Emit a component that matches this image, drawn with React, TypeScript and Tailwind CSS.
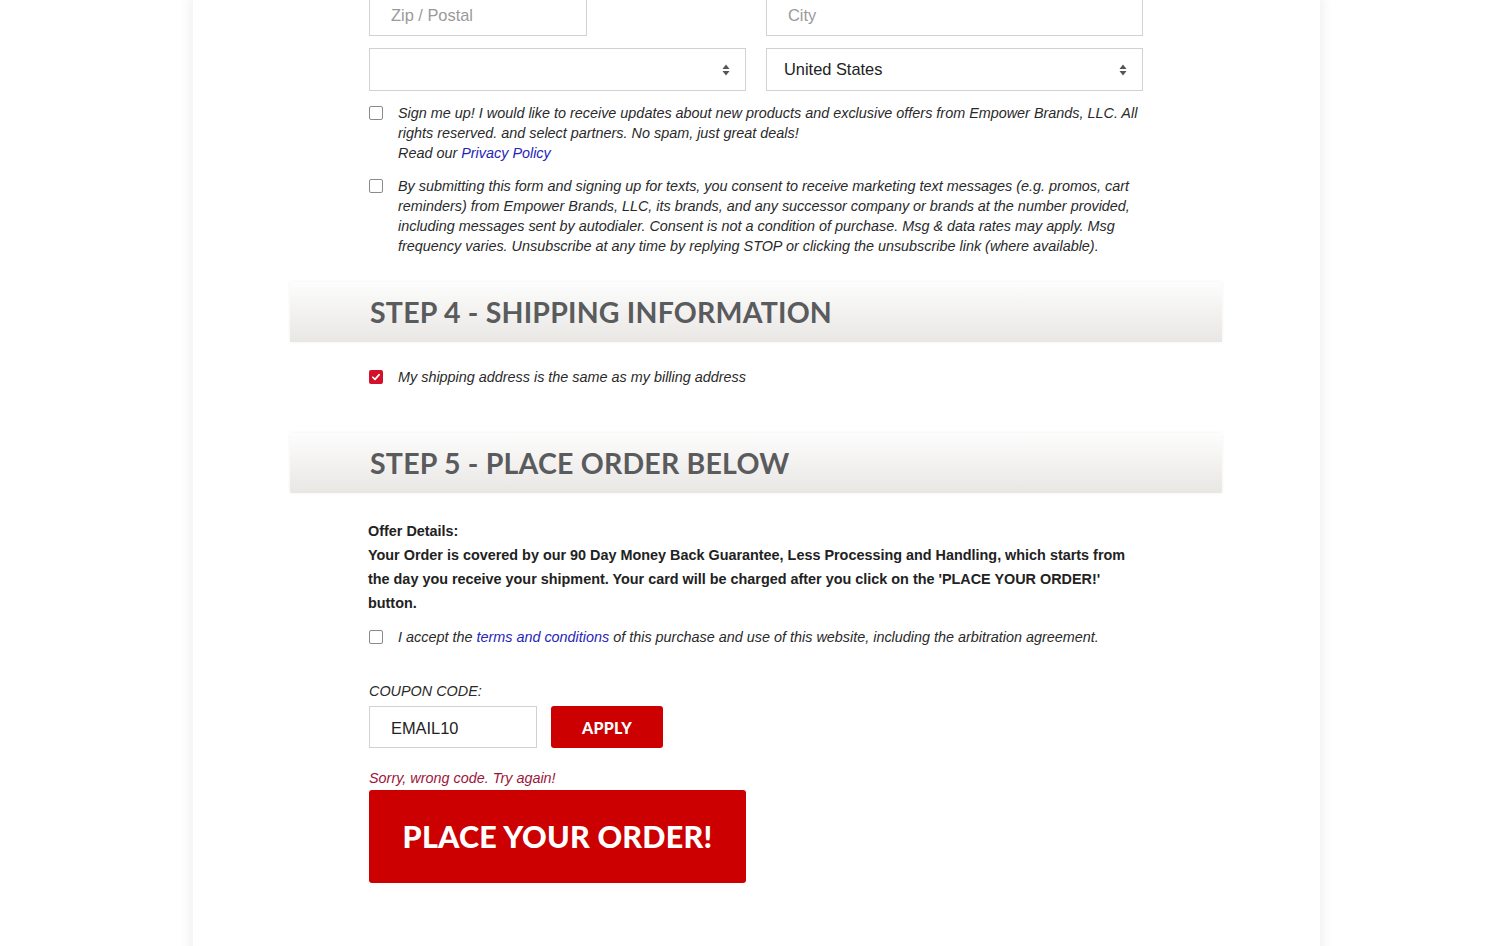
// Checkout form: steps 4 and 5 of the order page

const body = "font-['Liberation_Sans',Arial,sans-serif]";
const heading = "font-['Lato','Open_Sans',sans-serif]";

function Box({ checked = false }: { checked?: boolean }) {
  if (checked) {
    return (
      <span className="mt-[3px] flex h-[14px] w-[14px] shrink-0 items-center justify-center rounded-[2px] bg-[#d4112b]">
        <svg viewBox="0 0 12 12" className="h-[10px] w-[10px]">
          <path d="M2.2 6.3 4.8 8.8 9.8 3.2" fill="none" stroke="#fff" strokeWidth="2" strokeLinecap="round" strokeLinejoin="round" />
        </svg>
      </span>
    );
  }
  return <span className="mt-[3px] h-[14px] w-[14px] shrink-0 rounded-[2px] border border-[#8a8a8a] bg-white" />;
}

function Arrows() {
  return (
    <svg viewBox="0 0 8 12" className="h-[12px] w-[8px]">
      <path d="M4 0.5 7.5 5H0.5Z" fill="#555" />
      <path d="M4 11.5 7.5 7H0.5Z" fill="#555" />
    </svg>
  );
}

function Select({ value }: { value?: string }) {
  return (
    <div className="flex h-[43px] w-[377px] items-center justify-between border border-[#d2d2d2] bg-white pl-[17px] pr-[15px] text-[16.4px] text-[#222]">
      <span>{value}</span>
      <Arrows />
    </div>
  );
}

function StepHeader({ children }: { children: React.ReactNode }) {
  return (
    <div className="flex h-[60px] items-center bg-linear-to-b from-[#fdfdfd] to-[#e9e7e4] pl-[80px] shadow-[0_0_4px_rgba(0,0,0,0.06)]">
      <h2 className={`${heading} text-[28.5px] font-bold uppercase tracking-[0.2px] text-[#5a5b5d]`}>{children}</h2>
    </div>
  );
}

function CheckRow({ checked, children, className = "" }: { checked?: boolean; children: React.ReactNode; className?: string }) {
  return (
    <div className={`flex gap-[15px] text-[14.4px] italic leading-[20px] text-[#2a2a2a] ${className}`}>
      <Box checked={checked} />
      <p>{children}</p>
    </div>
  );
}

export default function App() {
  return (
    <div className={`${body} h-[946px] overflow-hidden bg-white`}>
      <div className="ml-[193px] min-h-[1000px] w-[1127px] bg-white shadow-[0_0_14px_rgba(0,0,0,0.09)]">
        <div className="ml-[176px] mt-[-7px] w-[774px]">
          <div className="flex gap-[20px]">
            <div className="w-[377px]">
              <input
                readOnly
                placeholder="Zip / Postal"
                className="h-[43px] w-[218px] border border-[#d2d2d2] bg-white px-[21px] pt-[2px] text-[16.4px] placeholder:text-[#9a9a9a]"
              />
            </div>
            <input
              readOnly
              placeholder="City"
              className="h-[43px] w-[377px] border border-[#d2d2d2] bg-white px-[21px] pt-[2px] text-[16.4px] placeholder:text-[#9a9a9a]"
            />
          </div>
          <div className="mt-[12px] flex gap-[20px]">
            <Select />
            <Select value="United States" />
          </div>
          <CheckRow className="mt-[12px]">
            Sign me up! I would like to receive updates about new products and exclusive offers from Empower Brands, LLC. All
            rights reserved. and select partners. No spam, just great deals!
            <br />
            Read our <a className="text-[#2525b8]">Privacy Policy</a>
          </CheckRow>
          <CheckRow className="mt-[13px]">
            By submitting this form and signing up for texts, you consent to receive marketing text messages (e.g. promos, cart
            reminders) from Empower Brands, LLC, its brands, and any successor company or brands at the number provided,
            including messages sent by autodialer. Consent is not a condition of purchase. Msg &amp; data rates may apply. Msg
            frequency varies. Unsubscribe at any time by replying STOP or clicking the unsubscribe link (where available).
          </CheckRow>
        </div>

        <div className="ml-[97px] mt-[26px] w-[932px]">
          <StepHeader>Step 4 - Shipping Information</StepHeader>
        </div>
        <div className="ml-[176px] mt-[25px] w-[774px]">
          <CheckRow checked>My shipping address is the same as my billing address</CheckRow>
        </div>

        <div className="ml-[97px] mt-[46px] w-[932px]">
          <StepHeader>Step 5 - Place Order Below</StepHeader>
        </div>

        <div className="ml-[175px] mt-[26px] w-[775px]">
          <div className="text-[14.4px] font-bold leading-[24px] text-[#222]">
            <p>Offer Details:</p>
            <p>
              Your Order is covered by our 90 Day Money Back Guarantee, Less Processing and Handling, which starts from the day you
              receive your shipment. Your card will be charged after you click on the 'PLACE YOUR ORDER!' button.
            </p>
          </div>
          <CheckRow className="ml-px mt-[12px]">
            I accept the <a className="text-[#2525b8]">terms and conditions</a> of this purchase and use of this website,
            including the arbitration agreement.
          </CheckRow>

          <p className="ml-px mt-[34px] text-[14.4px] italic uppercase leading-[20px] text-[#2a2a2a]">Coupon code:</p>
          <div className="ml-px mt-[5px] flex gap-[14px]">
            <input
              readOnly
              value="EMAIL10"
              className="h-[42px] w-[168px] border border-[#d2d2d2] bg-white px-[21px] pt-[2px] text-[16.4px] text-[#222]"
            />
            <button className={`${heading} h-[42px] w-[112px] rounded-[3px] bg-[#cc0000] pt-[2px] text-[16px] font-black tracking-[0.3px] text-white`}>
              APPLY
            </button>
          </div>
          <p className="ml-px mt-[20px] text-[14.4px] italic leading-[20px] text-[#9d1638]">Sorry, wrong code. Try again!</p>
          <button
            className={`${heading} ml-px mt-[2px] flex h-[93px] w-[377px] items-center justify-center rounded-[3px] bg-[#cc0000] text-[30.5px] font-black tracking-[0.2px] text-white`}
          >
            PLACE YOUR ORDER!
          </button>
        </div>
      </div>
    </div>
  );
}
